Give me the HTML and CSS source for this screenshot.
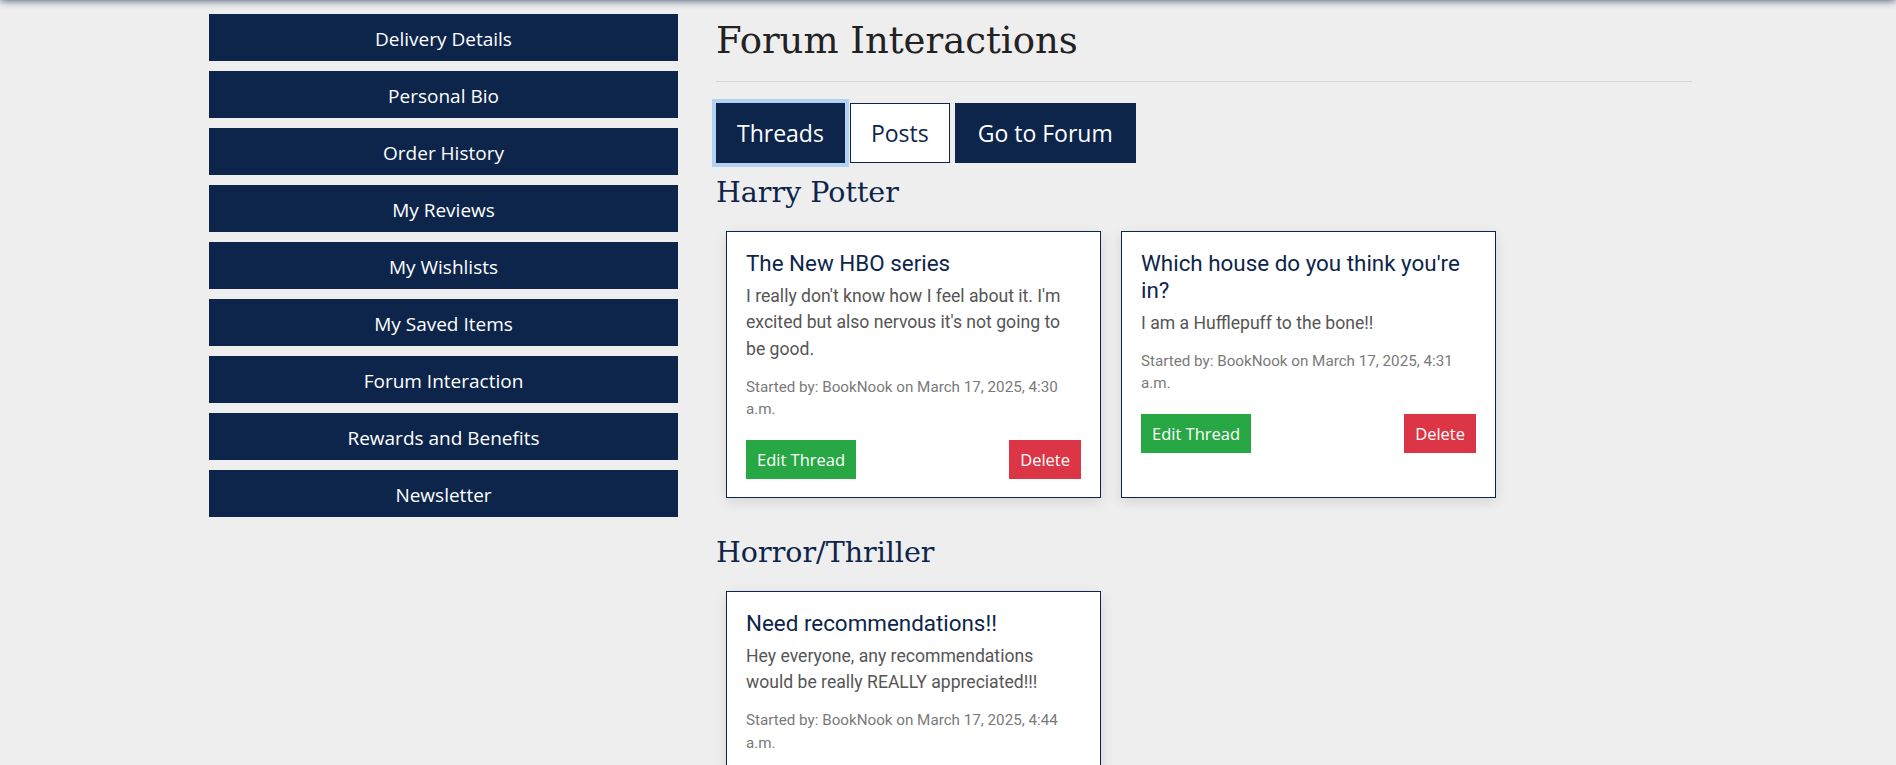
FILE: index.html
```html
<!DOCTYPE html>
<html lang="en">
<head>
<meta charset="utf-8">
<title>Forum Interactions</title>
<link rel="stylesheet" href="styles.css">
</head>
<body>
<div class="topshade"></div>
<div class="layout">
  <nav class="sidebar">
    <a class="side-btn" href="#">Delivery Details</a>
    <a class="side-btn" href="#">Personal Bio</a>
    <a class="side-btn" href="#">Order History</a>
    <a class="side-btn" href="#">My Reviews</a>
    <a class="side-btn" href="#">My Wishlists</a>
    <a class="side-btn" href="#">My Saved Items</a>
    <a class="side-btn" href="#">Forum Interaction</a>
    <a class="side-btn" href="#">Rewards and Benefits</a>
    <a class="side-btn" href="#">Newsletter</a>
  </nav>
  <main class="main">
    <h1 class="page-title">Forum Interactions</h1>
    <hr class="divider">
    <div class="tabs">
      <button class="tab tab-dark tab-focus">Threads</button>
      <button class="tab tab-light">Posts</button>
      <button class="tab tab-dark tab-wide">Go to Forum</button>
    </div>

    <h2 class="section-title">Harry Potter</h2>
    <div class="cards">
      <div class="card">
        <h3 class="card-title">The New HBO series</h3>
        <p class="card-text">I really don't know how I feel about it. I'm excited but also nervous it's not going to be good.</p>
        <p class="card-meta">Started by: BookNook on March 17, 2025, 4:30 a.m.</p>
        <div class="card-actions">
          <button class="btn btn-green">Edit Thread</button>
          <button class="btn btn-red">Delete</button>
        </div>
      </div>
      <div class="card">
        <h3 class="card-title">Which house do you think you're in?</h3>
        <p class="card-text">I am a Hufflepuff to the bone!!</p>
        <p class="card-meta">Started by: BookNook on March 17, 2025, 4:31 a.m.</p>
        <div class="card-actions">
          <button class="btn btn-green">Edit Thread</button>
          <button class="btn btn-red">Delete</button>
        </div>
      </div>
    </div>

    <h2 class="section-title">Horror/Thriller</h2>
    <div class="cards">
      <div class="card">
        <h3 class="card-title">Need recommendations!!</h3>
        <p class="card-text">Hey everyone, any recommendations would be really REALLY appreciated!!!</p>
        <p class="card-meta">Started by: BookNook on March 17, 2025, 4:44 a.m.</p>
        <div class="card-actions">
          <button class="btn btn-green">Edit Thread</button>
          <button class="btn btn-red">Delete</button>
        </div>
      </div>
    </div>
  </main>
</div>
</body>
</html>
```

FILE: styles.css
```css
* { box-sizing: border-box; }

html, body {
  margin: 0;
  padding: 0;
  background: #eeeeee;
}

body {
  font-family: Roboto, "Liberation Sans", sans-serif;
  color: #212529;
}

.topshade {
  position: fixed;
  top: -10px;
  left: 0;
  right: 0;
  height: 10px;
  background: #0d254b;
  box-shadow: 0 0 8px rgba(13, 37, 75, 0.85);
  z-index: 10;
}

.layout {
  display: flex;
  align-items: flex-start;
  gap: 38px;
  padding-left: 209px;
}

.sidebar {
  width: 469px;
  flex: 0 0 469px;
  display: flex;
  flex-direction: column;
  gap: 10px;
  padding-top: 14px;
}

.side-btn {
  display: flex;
  align-items: center;
  justify-content: center;
  height: 47px;
  background: #0d254b;
  color: #ffffff;
  text-decoration: none;
  font-family: "Open Sans", "Noto Sans", sans-serif;
  font-size: 19px;
  padding-top: 2px;
}

.main {
  width: 976px;
  flex: 0 0 976px;
  padding-top: 19px;
}

.page-title {
  margin: 0 0 18px;
  font-family: "DejaVu Serif", "Liberation Serif", serif;
  font-weight: normal;
  font-size: 37px;
  line-height: 44px;
  color: #222222;
}

.divider {
  margin: 0 0 21px;
  border: 0;
  border-top: 1px solid #d7d7d7;
  height: 0;
}

.tabs {
  display: flex;
  gap: 5px;
}

.tab {
  height: 60px;
  padding: 0 20px;
  font-family: "Open Sans", "Noto Sans", sans-serif;
  font-size: 23px;
  border: 1px solid #0d254b;
  cursor: pointer;
}

.tab-wide {
  padding: 0 22px;
}

.tab-dark {
  background: #0d254b;
  color: #ffffff;
}

.tab-light {
  background: #ffffff;
  color: #0d254b;
}

.tab-focus {
  box-shadow: 0 0 0 4px #b1d2f3;
}

.section-title {
  margin: 12px 0 20px;
  font-family: "DejaVu Serif", "Liberation Serif", serif;
  font-weight: normal;
  font-size: 28.5px;
  line-height: 36px;
  color: #0d254b;
}

.cards + .section-title {
  margin-top: 37px;
}

.cards {
  display: flex;
  align-items: stretch;
  gap: 20px;
  padding: 0 10px;
}

.card {
  width: 375px;
  background: #ffffff;
  border: 1px solid #0d254b;
  padding: 18px 19px;
  box-shadow: 0 4px 12px rgba(0, 0, 0, 0.1);
  display: flex;
  flex-direction: column;
}

.card-title {
  margin: 0 0 6px;
  font-weight: normal;
  font-size: 22.4px;
  line-height: 1.2;
  color: #0d254b;
}

.card-text {
  margin: 0 0 14px;
  font-size: 17.6px;
  line-height: 26.4px;
  color: #555555;
}

.card-meta {
  margin: 0 0 19px;
  font-size: 15.2px;
  line-height: 22.3px;
  color: #7a7a7a;
}

.card-actions {
  display: flex;
  justify-content: space-between;
  align-items: center;
}

.btn {
  font-family: "Open Sans", "Noto Sans", sans-serif;
  font-size: 16.5px;
  line-height: 25px;
  padding: 6px 10px;
  border: 1px solid transparent;
  color: #ffffff;
  cursor: pointer;
}

.btn-green {
  background: #28a745;
  border-color: #28a745;
}

.btn-red {
  background: #dc3545;
  border-color: #dc3545;
}
```
